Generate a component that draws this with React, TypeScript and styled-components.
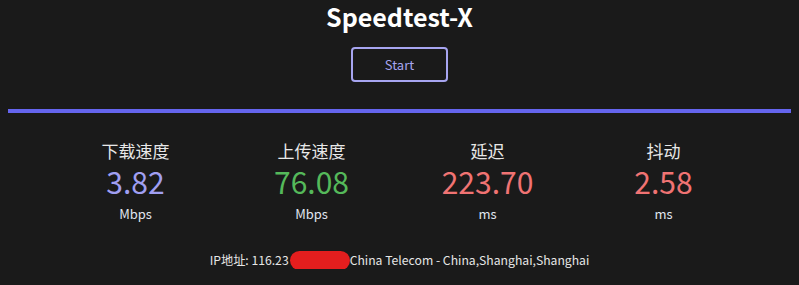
import React from "react";
import styled, { createGlobalStyle } from "styled-components";

const Global = createGlobalStyle`
  html, body { margin: 0; padding: 0; background: #1a1a1a; }
  body { padding: 0 8px; font-family: "Noto Sans CJK SC", "Noto Sans", sans-serif; color: #e6e6e6; }
`;

const Page = styled.div`
  display: flex;
  flex-direction: column;
  align-items: stretch;
  height: 285px;
  overflow: hidden;
`;

const Title = styled.h1`
  margin: 0;
  padding-top: 1px;
  text-align: center;
  font-size: 25px;
  line-height: 30px;
  font-weight: 700;
  color: #ffffff;
`;

const ButtonRow = styled.div`
  display: flex;
  justify-content: center;
  margin-top: 16px;
`;

const StartButton = styled.button`
  width: 97px;
  height: 35px;
  border: 2px solid #a7a5f0;
  border-radius: 4px;
  background: transparent;
  color: #a7a5f0;
  font-family: "Noto Sans CJK SC", "Noto Sans", sans-serif;
  font-size: 13px;
  cursor: pointer;
`;

const Bar = styled.div`
  margin-top: 27px;
  height: 4px;
  background: #6565ee;
`;

const Stats = styled.div`
  display: grid;
  grid-template-columns: repeat(4, 176px);
  justify-content: center;
  margin-top: 27px;
`;

const Stat = styled.div`
  display: flex;
  flex-direction: column;
  align-items: center;
`;

const Label = styled.div`
  font-size: 17px;
  line-height: 22px;
  color: #e8e8e8;
`;

const Value = styled.div<{ $color: string }>`
  margin-top: 2px;
  font-size: 30px;
  line-height: 34px;
  color: ${(p) => p.$color};
`;

const Unit = styled.div`
  margin-top: 8px;
  font-size: 13px;
  line-height: 16px;
  color: #e0e6f0;
`;

const Info = styled.div`
  margin-top: 29px;
  text-align: center;
  font-size: 12.2px;
  line-height: 18px;
  color: #e6e6e6;
`;

const Redacted = styled.span`
  position: relative;
  display: inline-block;
  width: 61px;
  height: 18px;
  overflow: hidden;
  vertical-align: top;
  white-space: nowrap;
`;

const Blob = styled.span`
  position: absolute;
  left: 1px;
  top: 0px;
  width: 60px;
  height: 19px;
  border-radius: 10px;
  background: #e41e1e;
`;

const stats = [
  { label: "下载速度", value: "3.82", unit: "Mbps", color: "#a09ff2" },
  { label: "上传速度", value: "76.08", unit: "Mbps", color: "#55b95a" },
  { label: "延迟", value: "223.70", unit: "ms", color: "#f07373" },
  { label: "抖动", value: "2.58", unit: "ms", color: "#f07373" },
];

export default function App() {
  return (
    <>
      <Global />
      <Page>
        <Title>Speedtest-X</Title>
        <ButtonRow>
          <StartButton>Start</StartButton>
        </ButtonRow>
        <Bar />
        <Stats>
          {stats.map((s) => (
            <Stat key={s.label}>
              <Label>{s.label}</Label>
              <Value $color={s.color}>{s.value}</Value>
              <Unit>{s.unit}</Unit>
            </Stat>
          ))}
        </Stats>
        <Info>
          IP地址: 116.23
          <Redacted>
            4.xx.xx
            <Blob />
          </Redacted>
          China Telecom - China,Shanghai,Shanghai
        </Info>
      </Page>
    </>
  );
}
